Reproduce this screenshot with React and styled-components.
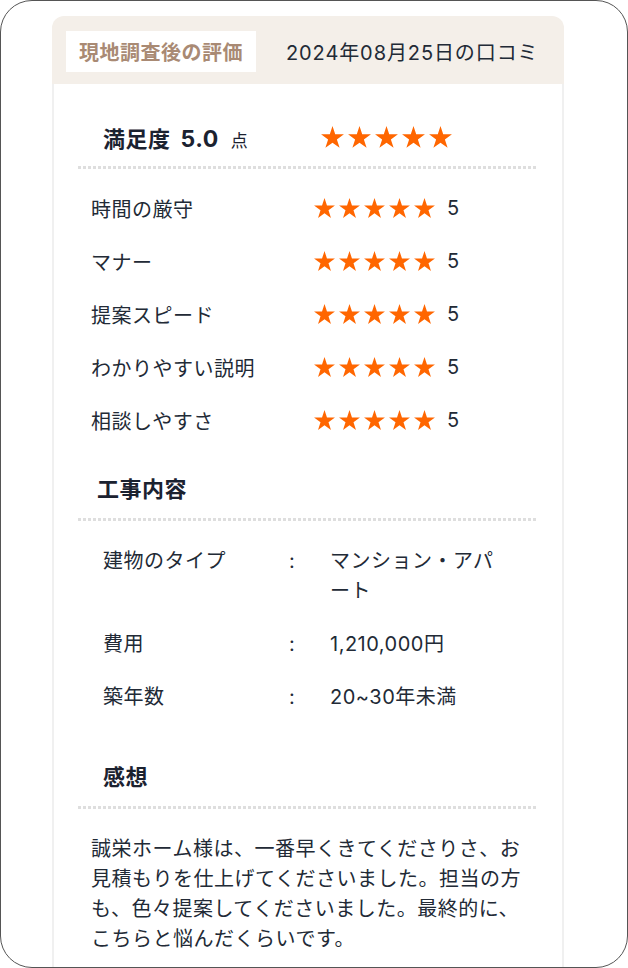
import React from 'react';
import styled, { createGlobalStyle } from 'styled-components';

const GlobalStyle = createGlobalStyle`
  body {
    margin: 0;
    background: #fff;
    font-family: 'Inter', 'Noto Sans CJK JP', sans-serif;
    color: #222a36;
    letter-spacing: 0.5px;
  }
`;

const Frame = styled.div`
  width: 628px;
  height: 968px;
  box-sizing: border-box;
  border: 1.5px solid #555;
  border-radius: 32px;
  overflow: hidden;
  padding-top: 14.5px;
  background: #fff;
`;

const Card = styled.div`
  margin-left: 51px;
  width: 512px;
`;

const Header = styled.div`
  display: flex;
  align-items: center;
  gap: 30px;
  padding: 15px 14px 12px;
  background: #f4efe9;
  border-radius: 12px 12px 0 0;
`;

const Badge = styled.div`
  display: flex;
  align-items: center;
  height: 41px;
  padding: 0 13px;
  background: #fff;
  color: #a98a74;
  font-size: 20px;
  font-weight: 700;
`;

const DateText = styled.div`
  font-size: 20px;
  letter-spacing: 0.9px;
  color: #222a36;
`;

const Body = styled.div`
  border-left: 2px solid #f0f0f0;
  border-right: 2px solid #f0f0f0;
  padding: 0 24px;
  min-height: 1000px;
`;

const Divider = styled.div`
  height: 3px;
  background-image: linear-gradient(to right, #dedede 60%, transparent 0);
  background-size: 5px 3px;
`;

const SummaryRow = styled.div`
  display: flex;
  align-items: center;
  height: 30px;
  padding: 38px 0 14px 25px;
`;

const SummaryLabel = styled.div`
  display: flex;
  align-items: baseline;
  width: 218px;
  font-size: 22px;
  font-weight: 700;
  color: #1b2230;
`;

const Score = styled.span`
  margin-left: 10px;
  font-size: 23px;
`;

const Unit = styled.span`
  margin-left: 12px;
  font-size: 17px;
  font-weight: 400;
`;

const Stars = styled.div`
  display: flex;
  gap: ${(p) => p.$gap}px;
`;

const RatingList = styled.div`
  padding-top: 13px;
`;

const RatingRow = styled.div`
  display: flex;
  align-items: center;
  height: 53px;
  padding-left: 13px;
  font-size: 20px;
`;

const RatingLabel = styled.div`
  width: 223px;
`;

const RatingValue = styled.div`
  margin-left: 12px;
`;

const Heading = styled.h2`
  margin: 0;
  padding: ${(p) => p.$top}px 0 14px ${(p) => p.$indent}px;
  font-size: 22px;
  line-height: 30px;
  font-weight: 700;
  color: #1b2230;
`;

const DetailList = styled.div`
  display: flex;
  flex-direction: column;
  gap: 23px;
  padding: 25px 0 21px;
`;

const DetailRow = styled.div`
  display: flex;
  padding-left: 25px;
  font-size: 20px;
  line-height: 30px;
`;

const DetailLabel = styled.div`
  width: 186px;
`;

const Colon = styled.div`
  width: 41px;
`;

const DetailValue = styled.div`
  width: 176px;
`;

const Comment = styled.p`
  margin: 0;
  padding: 25px 13px 0;
  font-size: 20px;
  line-height: 30px;
`;

const Star = ({ size }) => (
  <svg width={size} height={size - 1} viewBox="1.5 1.5 21 20">
    <polygon
      fill="#ff6600"
      points="12,1.5 14.47,9.1 22.46,9.1 16,13.8 18.47,21.4 12,16.7 5.53,21.4 8,13.8 1.54,9.1 9.53,9.1"
    />
  </svg>
);

const StarRow = ({ size, gap }) => (
  <Stars $gap={gap}>
    {[0, 1, 2, 3, 4].map((i) => (
      <Star key={i} size={size} />
    ))}
  </Stars>
);

const ratings = ['時間の厳守', 'マナー', '提案スピード', 'わかりやすい説明', '相談しやすさ'];

const details = [
  ['建物のタイプ', 'マンション・アパート'],
  ['費用', '1,210,000円'],
  ['築年数', '20~30年未満'],
];

const App = () => {
  return (
    <Frame>
      <GlobalStyle />
      <Card>
        <Header>
          <Badge>現地調査後の評価</Badge>
          <DateText>2024年08月25日の口コミ</DateText>
        </Header>
        <Body>
          <SummaryRow>
            <SummaryLabel>
              満足度<Score>5.0</Score><Unit>点</Unit>
            </SummaryLabel>
            <StarRow size={23} gap={4} />
          </SummaryRow>
          <Divider />

          <RatingList>
            {ratings.map((label) => (
              <RatingRow key={label}>
                <RatingLabel>{label}</RatingLabel>
                <StarRow size={21} gap={4} />
                <RatingValue>5</RatingValue>
              </RatingRow>
            ))}
          </RatingList>

          <Heading $indent={19} $top={27}>工事内容</Heading>
          <Divider />
          <DetailList>
            {details.map(([label, value]) => (
              <DetailRow key={label}>
                <DetailLabel>{label}</DetailLabel>
                <Colon>:</Colon>
                <DetailValue>{value}</DetailValue>
              </DetailRow>
            ))}
          </DetailList>

          <Heading $indent={25} $top={29}>感想</Heading>
          <Divider />
          <Comment>
            誠栄ホーム様は、一番早くきてくださりさ、お見積もりを仕上げてくださいました。担当の方も、色々提案してくださいました。最終的に、こちらと悩んだくらいです。
          </Comment>
        </Body>
      </Card>
    </Frame>
  );
};

export default App;
